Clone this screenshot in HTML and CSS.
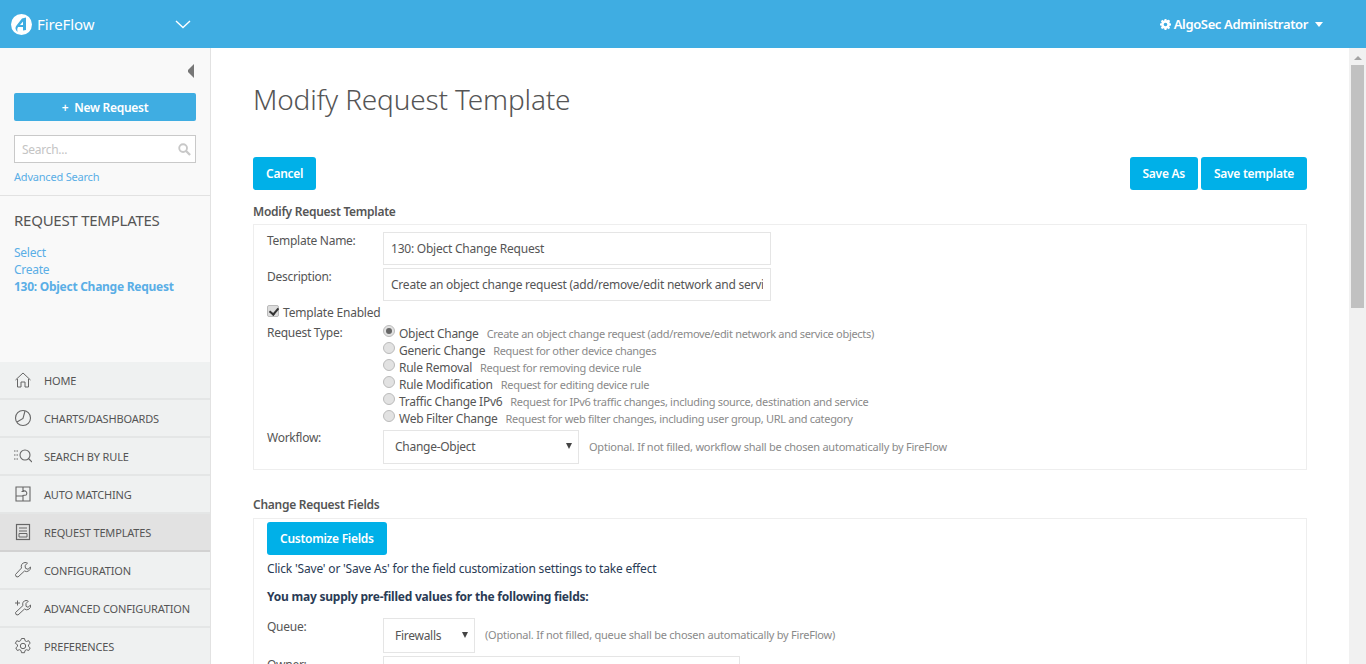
FILE: index.html
```html
<!DOCTYPE html>
<html lang="en">
<head>
<meta charset="utf-8">
<title>Modify Request Template</title>
<link rel="stylesheet" href="styles.css">
</head>
<body>
<header class="topbar">
  <div class="brand">
    <svg class="logo" viewBox="0 0 21 21" width="21" height="21"><circle cx="10.500" cy="10.500" r="10.500" fill="#fff"/><path d="M11 4.500 L15 3.500 L15 16 L12 16.500 L12 13 L7 13 Q5.500 15 6.500 18 Q3 14.500 5.500 11.500 Z M12 11 L12 7.500 L9 11 Z" fill="#3fade2" fill-rule="evenodd"/></svg>
    <span class="brand-name">FireFlow</span>
  </div>
  <svg class="chevron" viewBox="0 0 16 9" width="16" height="9"><path d="M1 1 L8 7.500 L15 1" fill="none" stroke="#fff" stroke-width="1.400"/></svg>
  <div class="user">
    <svg viewBox="0 0 12 12" width="11" height="11"><path fill="#fff" fill-rule="evenodd" d="M5 0h2l.3 1.600 1-.4L9.600 0.700l1.500 1.500-.9 1.300.5 1 1.300.5v2l-1.500.3-.4 1 .9 1.300-1.500 1.500-1.300-.9-1 .4L7 12H5l-.3-1.500-1-.4-1.300.9-1.500-1.500.9-1.300-.4-1L0 7V5l1.500-.3.4-1-.9-1.300L2.500.9l1.300.9 1-.4zM6 4a2 2 0 1 0 0 4 2 2 0 0 0 0-4z"/></svg>
    <span>AlgoSec Administrator</span>
    <i class="caret"></i>
  </div>
</header>
<div class="body-row">
  <aside class="sidebar">
    <div class="side-top">
      <div class="collapse-row"><i class="collapse"></i></div>
      <button class="new-request"><span class="plus">+</span>New Request</button>
      <div class="search">
        <span>Search...</span>
        <svg viewBox="0 0 14 14" width="13" height="13"><circle cx="5.500" cy="5.500" r="4.200" fill="none" stroke="#c8c8c8" stroke-width="2"/><path d="M8.700 8.700L13 13" stroke="#c8c8c8" stroke-width="2.400"/></svg>
      </div>
      <a class="adv">Advanced Search</a>
    </div>
    <div class="side-section">
      <h2>REQUEST TEMPLATES</h2>
      <a>Select</a>
      <a>Create</a>
      <a class="current">130: Object Change Request</a>
    </div>
    <nav class="nav">
      <a class="nav-item"><svg viewBox="0 0 18 18" width="18" height="18"><path d="M1.500 9L9 2l7.500 7M3.500 8v8h3.500v-5h4v5h3.500V8" fill="none" stroke="#666" stroke-width="1"/></svg>HOME</a>
      <a class="nav-item"><svg viewBox="0 0 18 18" width="18" height="18"><circle cx="9" cy="9" r="7.500" fill="none" stroke="#666" stroke-width="1.100"/><path d="M11 2L9 9.500 3 13" fill="none" stroke="#666" stroke-width="1.100"/></svg>CHARTS/DASHBOARDS</a>
      <a class="nav-item"><svg viewBox="0 0 18 18" width="18" height="18"><path d="M0 4h5M0 8h4M0 12h5" stroke="#666" stroke-width="1" stroke-dasharray="1.500 1" fill="none"/><circle cx="11" cy="8" r="5" fill="none" stroke="#666" stroke-width="1.100"/><path d="M14.500 11.500L18 15" stroke="#666" stroke-width="1.100"/></svg>SEARCH BY RULE</a>
      <a class="nav-item"><svg viewBox="0 0 18 18" width="18" height="18"><path d="M2 2h14v14H2zM9 2v4.500H7.500M9 6.500a2.300 2.300 0 0 1 3 3.500l-3 .5v5.500M2 11h7" fill="none" stroke="#666" stroke-width="1.100"/></svg>AUTO MATCHING</a>
      <a class="nav-item active"><svg viewBox="0 0 18 18" width="18" height="18"><rect x="2.500" y="1.500" width="13" height="15" fill="none" stroke="#666" stroke-width="1.200"/><path d="M5 5h8M5 8h8M5 10.500h8v3.500H5z" fill="none" stroke="#666"/></svg>REQUEST TEMPLATES</a>
      <a class="nav-item"><svg viewBox="0 0 18 18" width="18" height="18"><path d="M11 1.500a4 4 0 0 0-3.500 5.500L1.500 13.500 2 15.500l2 .5 6.500-6a4 4 0 0 0 6-4l-2.500 2.300-2.500-1L11 4.500 13.500 2.200A4 4 0 0 0 11 1.500z" fill="none" stroke="#666" stroke-width="1"/></svg>CONFIGURATION</a>
      <a class="nav-item"><svg viewBox="0 0 18 18" width="18" height="18"><path d="M12 1.500a3.500 3.500 0 0 0-3 5L1.500 13.500 2 15.500l2 .5 6.500-6a3.800 3.800 0 0 0 6-4l-2.500 2.300-2-1L12 4.500l2.300-2.300A4 4 0 0 0 12 1.500zM1 4h5M3.500 1.500v5" fill="none" stroke="#666" stroke-width="1"/></svg>ADVANCED CONFIGURATION</a>
      <a class="nav-item"><svg viewBox="0 0 18 18" width="18" height="18"><path d="M7.500 1.500h3l.5 2.200 1.500.8 2.200-.8 1.500 2.600-1.700 1.500v1.600l1.700 1.500-1.500 2.600-2.200-.8-1.500.8-.5 2.200h-3l-.5-2.200-1.500-.8-2.200.8-1.500-2.600 1.700-1.500V7.800L1.300 6.300l1.500-2.600 2.200.8 1.500-.8z" fill="none" stroke="#666"/><circle cx="9" cy="9" r="2.700" fill="none" stroke="#666"/></svg>PREFERENCES</a>
    </nav>
  </aside>
  <main class="main">
    <div class="content">
      <h1>Modify Request Template</h1>
      <div class="actions">
        <button class="btn">Cancel</button>
        <div class="actions-right">
          <button class="btn">Save As</button>
          <button class="btn">Save template</button>
        </div>
      </div>
      <h3 class="legend">Modify Request Template</h3>
      <section class="box form-box">
        <div class="row r-name"><label>Template Name:</label><input class="field w388" value="130: Object Change Request"></div>
        <div class="row r-desc"><label>Description:</label><input class="field w388" value="Create an object change request (add/remove/edit network and service objects)"></div>
        <div class="check-row"><i class="checkbox"></i>Template Enabled</div>
        <div class="row r-type">
          <label>Request Type:</label>
          <ul class="types">
            <li><i class="radio on"></i><b>Object Change</b><em>Create an object change request (add/remove/edit network and service objects)</em></li>
            <li><i class="radio"></i><b>Generic Change</b><em>Request for other device changes</em></li>
            <li><i class="radio"></i><b>Rule Removal</b><em>Request for removing device rule</em></li>
            <li><i class="radio"></i><b>Rule Modification</b><em>Request for editing device rule</em></li>
            <li><i class="radio"></i><b>Traffic Change IPv6</b><em>Request for IPv6 traffic changes, including source, destination and service</em></li>
            <li><i class="radio"></i><b>Web Filter Change</b><em>Request for web filter changes, including user group, URL and category</em></li>
          </ul>
        </div>
        <div class="row r-flow"><label>Workflow:</label><div class="select w196">Change-Object<i class="sel-caret"></i></div><span class="hint">Optional. If not filled, workflow shall be chosen automatically by FireFlow</span></div>
      </section>
      <h3 class="legend second">Change Request Fields</h3>
      <section class="box fields-box">
        <button class="btn btn-wide">Customize Fields</button>
        <p class="note">Click 'Save' or 'Save As' for the field customization settings to take effect</p>
        <p class="note strong">You may supply pre-filled values for the following fields:</p>
        <div class="row r-queue"><label>Queue:</label><div class="select w92">Firewalls<i class="sel-caret"></i></div><span class="hint">(Optional. If not filled, queue shall be chosen automatically by FireFlow)</span></div>
        <div class="row r-owner"><label>Owner:</label><input class="field w357"></div>
      </section>
    </div>
  </main>
  <div class="scrollbar" aria-hidden="true">
    <i class="scroll-up"></i>
    <i class="scroll-thumb"></i>
  </div>
</div>
</body>
</html>
```
FILE: styles.css
```css
* { box-sizing: border-box; }
html, body { margin: 0; height: 100%; overflow: hidden; }
body {
  display: flex;
  flex-direction: column;
  font-family: "Noto Sans", "Open Sans", sans-serif;
  font-size: 12px;
  letter-spacing: -0.27px;
  color: #555;
  background: #fff;
}
button { font-family: inherit; border: 0; cursor: pointer; letter-spacing: inherit; }

/* top bar */
.topbar {
  flex: 0 0 48px;
  background: #3fade2;
  display: flex;
  align-items: center;
  color: #fff;
  padding-left: 11px;
}
.brand { display: flex; align-items: center; gap: 5px; width: 164px; }
.brand-name { font-size: 15px; letter-spacing: -0.1px; }
.chevron { display: block; }
.user {
  margin-left: auto;
  margin-right: 43px;
  display: flex;
  align-items: center;
  gap: 3px;
  font-size: 13px;
  font-weight: 600;
  letter-spacing: -0.36px;
}
.caret {
  margin-left: 4px;
  border-left: 4.5px solid transparent;
  border-right: 4.5px solid transparent;
  border-top: 5px solid #fff;
}

.body-row { flex: 1; display: flex; min-height: 0; }

/* sidebar */
.sidebar {
  flex: 0 0 211px;
  background: #f9f9f9;
  border-right: 1px solid #e2e2e2;
  display: flex;
  flex-direction: column;
}
.side-top { flex: none; padding: 16px 14px 0; height: 148px; border-bottom: 1px solid #e2e2e2; }
.collapse-row { display: flex; justify-content: flex-end; height: 29px; }
.collapse {
  margin-right: 2px;
  height: 14px;
  border-top: 6px solid transparent;
  border-bottom: 6px solid transparent;
  border-right: 6px solid #777;
}
.new-request {
  display: block;
  width: 182px;
  height: 28px;
  background: #3fade2;
  color: #fff;
  border-radius: 2px;
  font-size: 12px;
  font-weight: 600;
}
.plus { margin-right: 6px; }
.search {
  margin-top: 14px;
  height: 28px;
  background: #fff;
  border: 1px solid #c9c9c9;
  display: flex;
  align-items: center;
  justify-content: space-between;
  padding: 0 4px 0 7px;
  color: #c4c4c4;
}
.adv { display: block; margin-top: 5px; color: #5aaee6; font-size: 11px; letter-spacing: -0.2px; line-height: 17px; }
.side-section { flex: none; padding: 0 14px; height: 166px; }
.side-section h2 { margin: 14px 0 14px; font-size: 15px; font-weight: 400; letter-spacing: -0.25px; color: #555; line-height: 20px; }
.side-section a { display: block; color: #5aaee6; line-height: 17px; }
.side-section a.current { font-weight: 700; }
.nav { flex: none; display: flex; flex-direction: column; }
.nav-item {
  height: 38px;
  flex: none;
  display: flex;
  align-items: center;
  gap: 12px;
  padding-left: 14px;
  background: #eff1f1;
  border-bottom: 2px solid #e4e6e6;
  font-size: 11px;
  letter-spacing: -0.16px;
  color: #555;
}
.nav-item.active { background: #e2e2e2; border-bottom-color: #d2d2d2; }

/* main */
.main { flex: 1; overflow: hidden; min-width: 0; }
.content { padding: 0 42px; }
.scrollbar {
  flex: 0 0 17px;
  background: #f1f1f1;
  display: flex;
  flex-direction: column;
  align-items: center;
}
.scroll-up {
  margin-top: 8px;
  border-left: 4.5px solid transparent;
  border-right: 4.5px solid transparent;
  border-bottom: 4px solid #a3a3a3;
}
.scroll-thumb { margin-top: 5px; width: 13px; height: 243px; background: #c1c1c1; }
h1 {
  margin: 0;
  padding-top: 33px;
  font-size: 28px;
  line-height: 36px;
  font-weight: 300;
  letter-spacing: -0.16px;
  color: #555;
}
.actions { display: flex; justify-content: space-between; margin-top: 40px; }
.actions-right { display: flex; gap: 3px; }
.btn {
  height: 33px;
  padding: 0 13px;
  background: #00b0e8;
  color: #fff;
  border-radius: 3px;
  font-size: 12px;
  font-weight: 600;
}
.legend { margin: 14px 0 4px; font-size: 12px; font-weight: 600; line-height: 16px; color: #555; }
.legend.second { margin: 27px 0 5px; }
.box { border: 1px solid #eee; padding-left: 13px; }
.form-box { height: 246px; padding-top: 7px; }
.row { display: flex; }
.row label { flex: 0 0 116px; padding-top: 1px; line-height: 16px; }
.field {
  display: block;
  height: 33px;
  border: 1px solid #e5e5e5;
  padding: 0 7px;
  font: inherit;
  letter-spacing: -0.23px;
  color: inherit;
  background: #fff;
  outline: 0;
}
.w388 { width: 388px; }
.w357 { width: 357px; }
.r-desc { margin-top: 3px; }
.check-row { display: flex; align-items: center; height: 17px; margin-top: 3px; line-height: 17px; letter-spacing: -0.2px; }
.checkbox {
  width: 12px; height: 12px; margin-right: 4px;
  background: #ddd; border: 1px solid #bbb; border-radius: 2px; position: relative; top: -2px;
}
.checkbox::after {
  content: ""; position: absolute; left: 3px; top: 0;
  width: 4px; height: 7px;
  border: solid #333; border-width: 0 2px 2px 0;
  transform: rotate(40deg);
}
.r-type { margin-top: 4px; }
.r-type label { padding-top: 0; }
.types { list-style: none; margin: 0; padding: 0; }
.types li { display: flex; align-items: center; height: 17px; line-height: 17px; white-space: nowrap; }
.types b { font-weight: 400; margin-right: 8px; }
.types em { font-style: normal; font-size: 11px; letter-spacing: -0.3px; color: #8a8a8a; }
.radio {
  width: 12px; height: 12px; margin-right: 4px; border-radius: 50%;
  background: #e2e2e2; border: 1px solid #bbb; position: relative; top: -3px;
}
.radio.on::after {
  content: ""; position: absolute; left: 2px; top: 2px;
  width: 6px; height: 6px; border-radius: 50%; background: #666;
}
.r-flow { margin-top: 3px; align-items: flex-start; }
.r-flow label { padding-top: 0; }
.select {
  height: 34px;
  border: 1px solid #e5e5e5;
  padding-left: 11px;
  line-height: 32px;
  position: relative;
}
.w196 { width: 196px; }
.w92 { width: 92px; }
.sel-caret {
  position: absolute; right: 6px; top: 12px;
  border-left: 3px solid transparent; border-right: 3px solid transparent; border-top: 6px solid #444;
}
.hint { margin-left: 10px; font-size: 11px; letter-spacing: -0.23px; color: #8a8a8a; line-height: 34px; }
.fields-box { padding-top: 3px; height: 400px; }
.btn-wide { display: block; }
.note { margin: 6px 0 0; line-height: 16px; color: #2a3b55; letter-spacing: -0.18px; }
.note.strong { margin-top: 12px; font-weight: 700; letter-spacing: -0.22px; }
.r-queue { margin-top: 13px; align-items: flex-start; }
.r-queue .select { height: 35px; line-height: 33px; }
.r-queue .sel-caret { top: 13px; }
.r-owner { margin-top: 3px; }
```
